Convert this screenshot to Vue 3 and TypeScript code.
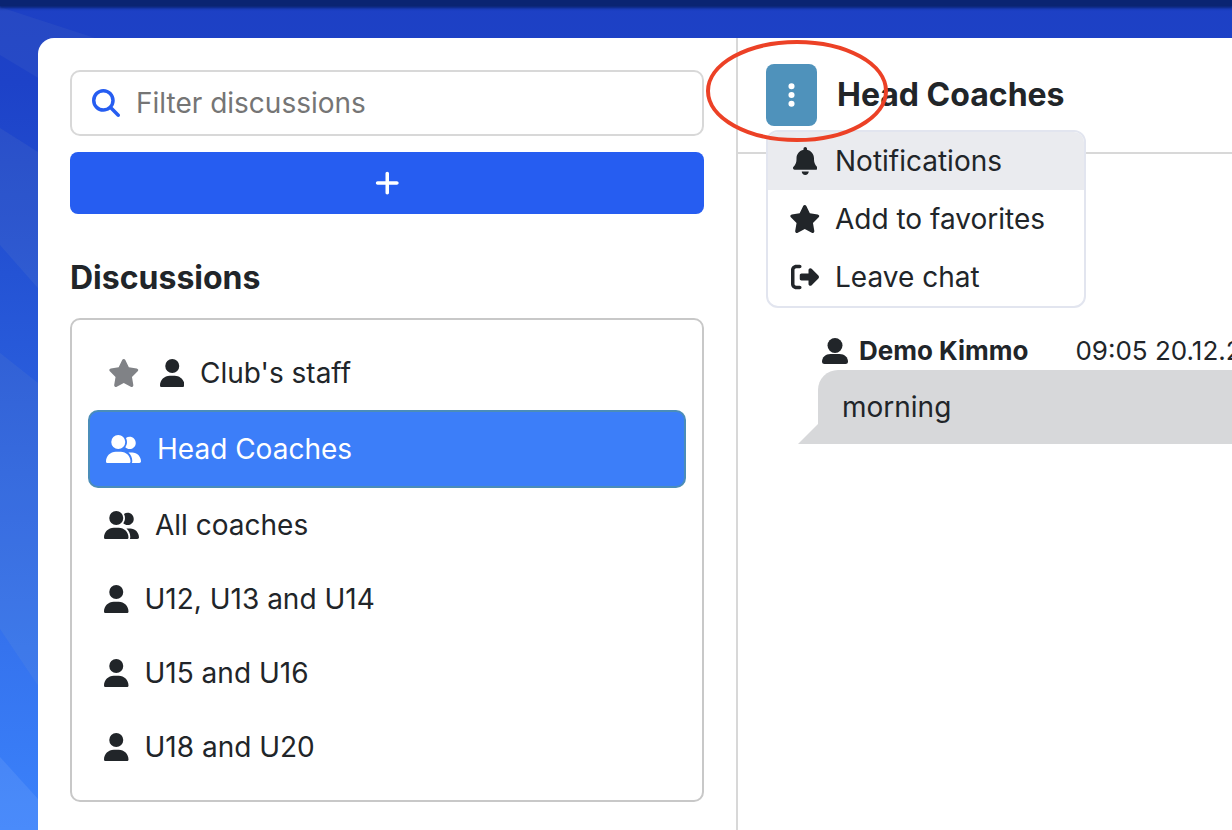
<script setup lang="ts">
import { ref } from 'vue'

type IconName = 'user' | 'group' | 'star' | 'bell' | 'leave' | 'search' | 'plus' | 'dots'

interface Icon {
  width: number
  path: string
}

interface Discussion {
  id: number
  name: string
  icon: IconName
  favorite: boolean
}

interface MenuEntry {
  label: string
  icon: IconName
}

const icons: Record<IconName, Icon> = {
  user: {
    width: 448,
    path: 'M224 256A128 128 0 1 0 224 0a128 128 0 1 0 0 256zm-45.7 48C79.8 304 0 383.8 0 482.3C0 498.7 13.3 512 29.7 512H418.3c16.4 0 29.7-13.3 29.7-29.7C448 383.8 368.2 304 269.7 304H178.3z',
  },
  group: {
    width: 640,
    path: 'M96 128a128 128 0 1 1 256 0A128 128 0 1 1 96 128zM0 482.3C0 383.8 79.8 304 178.3 304h91.4C368.2 304 448 383.8 448 482.3c0 16.4-13.3 29.7-29.7 29.7H29.7C13.3 512 0 498.7 0 482.3zM609.3 512H471.4c5.4-9.4 8.6-20.3 8.6-32v-8c0-60.7-27.1-115.2-69.8-151.8c2.4-.1 4.7-.2 7.1-.2h61.4C567.8 320 640 392.2 640 481.3c0 17-13.8 30.7-30.7 30.7zM432 256c-31 0-59-12.6-79.3-32.9C372.4 196.5 384 163.6 384 128c0-26.8-6.6-52.1-18.3-74.3C384.3 40.1 407.2 32 432 32c61.9 0 112 50.1 112 112s-50.1 112-112 112z',
  },
  star: {
    width: 576,
    path: 'M316.9 18C311.6 7 300.4 0 288.1 0s-23.4 7-28.8 18L195 150.3 51.4 171.5c-12 1.8-22 10.2-25.7 21.7s-.7 24.2 7.9 32.7L137.8 329 113.2 474.7c-2 12 3 24.2 12.9 31.3s23 8 33.8 2.3l128.3-68.5 128.3 68.5c10.8 5.7 23.9 4.9 33.8-2.3s14.9-19.3 12.9-31.3L438.5 329 542.7 225.9c8.6-8.5 11.7-21.2 7.9-32.7s-13.7-19.9-25.7-21.7L381.2 150.3 316.9 18z',
  },
  bell: {
    width: 448,
    path: 'M224 0c-17.7 0-32 14.3-32 32V51.2C119 66 64 130.6 64 208v18.8c0 47-17.3 92.4-48.5 127.6l-7.4 8.3c-8.4 9.4-10.4 22.9-5.3 34.4S19.4 416 32 416H416c12.6 0 24-7.4 29.2-18.9s3.1-25-5.3-34.4l-7.4-8.3C401.3 319.2 384 273.9 384 226.8V208c0-77.4-55-142-128-156.8V32c0-17.7-14.3-32-32-32zm45.3 493.3c12-12 18.7-28.3 18.7-45.3H224 160c0 17 6.7 33.3 18.7 45.3s28.3 18.7 45.3 18.7s33.3-6.7 45.3-18.7z',
  },
  leave: {
    width: 512,
    path: 'M377.9 105.9L500.7 228.7c7.2 7.2 11.3 17.1 11.3 27.3s-4.1 20.1-11.3 27.3L377.9 406.1c-6.4 6.4-15 9.9-24 9.9c-18.7 0-33.9-15.2-33.9-33.9l0-62.1-128 0c-17.7 0-32-14.3-32-32l0-64c0-17.7 14.3-32 32-32l128 0 0-62.1c0-18.7 15.2-33.9 33.9-33.9c9 0 17.6 3.6 24 9.9zM160 96L96 96c-17.7 0-32 14.3-32 32l0 256c0 17.7 14.3 32 32 32l64 0c17.7 0 32 14.3 32 32s-14.3 32-32 32l-64 0c-53 0-96-43-96-96L0 128C0 75 43 32 96 32l64 0c17.7 0 32 14.3 32 32s-14.3 32-32 32z',
  },
  search: {
    width: 512,
    path: 'M416 208c0 45.9-14.9 88.3-40 122.7L502.6 457.4c12.5 12.5 12.5 32.8 0 45.3s-32.8 12.5-45.3 0L330.7 376c-34.4 25.2-76.8 40-122.7 40C93.1 416 0 322.9 0 208S93.1 0 208 0S416 93.1 416 208zM208 352a144 144 0 1 0 0-288 144 144 0 1 0 0 288z',
  },
  plus: {
    width: 448,
    path: 'M256 80c0-17.7-14.3-32-32-32s-32 14.3-32 32V224H48c-17.7 0-32 14.3-32 32s14.3 32 32 32H192V432c0 17.7 14.3 32 32 32s32-14.3 32-32V288H400c17.7 0 32-14.3 32-32s-14.3-32-32-32H256V80z',
  },
  dots: {
    width: 128,
    path: 'M64 360a56 56 0 1 0 0 112 56 56 0 1 0 0-112zm0-160a56 56 0 1 0 0 112 56 56 0 1 0 0-112zM120 96A56 56 0 1 0 8 96a56 56 0 1 0 112 0z',
  },
}

const viewBox = (name: IconName): string => `0 0 ${icons[name].width} 512`

const discussions: Discussion[] = [
  { id: 1, name: "Club's staff", icon: 'user', favorite: true },
  { id: 2, name: 'Head Coaches', icon: 'group', favorite: false },
  { id: 3, name: 'All coaches', icon: 'group', favorite: false },
  { id: 4, name: 'U12, U13 and U14', icon: 'user', favorite: false },
  { id: 5, name: 'U15 and U16', icon: 'user', favorite: false },
  { id: 6, name: 'U18 and U20', icon: 'user', favorite: false },
]

const menu: MenuEntry[] = [
  { label: 'Notifications', icon: 'bell' },
  { label: 'Add to favorites', icon: 'star' },
  { label: 'Leave chat', icon: 'leave' },
]

const filter = ref('')
const selected = ref(2)
const menuOpen = ref(true)
</script>

<template>
  <div class="page">
    <svg class="rays" aria-hidden="true">
      <polygon class="faint" points="0,7 95,38 95,112 0,55" />
      <polygon points="0,128 95,188 95,353 0,245" />
      <polygon points="0,353 95,428 95,770 0,629" />
      <polygon class="bright" points="0,757 95,862 0,862" />
    </svg>
    <div class="topbar"></div>

    <main class="card">
      <aside class="sidebar">
        <label class="search">
          <svg class="icon" :viewBox="viewBox('search')" aria-hidden="true"><path :d="icons.search.path" /></svg>
          <input v-model="filter" type="text" placeholder="Filter discussions" aria-label="Filter discussions" />
        </label>
        <button class="add" type="button" aria-label="New discussion">
          <svg class="icon" :viewBox="viewBox('plus')" aria-hidden="true"><path :d="icons.plus.path" /></svg>
        </button>
        <h2 class="heading">Discussions</h2>
        <ul class="list">
          <li v-for="item in discussions" :key="item.id">
            <button
              type="button"
              class="item"
              :class="{ active: item.id === selected }"
              @click="selected = item.id"
            >
              <svg v-if="item.favorite" class="icon favorite" :viewBox="viewBox('star')" aria-hidden="true">
                <path :d="icons.star.path" />
              </svg>
              <svg class="icon" :viewBox="viewBox(item.icon)" aria-hidden="true">
                <path :d="icons[item.icon].path" />
              </svg>
              <span>{{ item.name }}</span>
            </button>
          </li>
        </ul>
      </aside>

      <section class="chat">
        <header class="chat-header">
          <div class="menu-anchor">
            <button
              class="menu-toggle"
              type="button"
              aria-label="Discussion options"
              :aria-expanded="menuOpen"
              @click="menuOpen = !menuOpen"
            >
              <svg class="icon" :viewBox="viewBox('dots')" aria-hidden="true"><path :d="icons.dots.path" /></svg>
            </button>
            <ul v-if="menuOpen" class="menu">
              <li v-for="entry in menu" :key="entry.label">
                <button type="button" class="menu-item" :class="{ current: entry.icon === 'bell' }">
                  <span class="menu-icon">
                    <svg class="icon" :viewBox="viewBox(entry.icon)" aria-hidden="true">
                      <path :d="icons[entry.icon].path" />
                    </svg>
                  </span>
                  {{ entry.label }}
                </button>
              </li>
            </ul>
            <svg class="highlight" viewBox="0 0 184 104" aria-hidden="true">
              <ellipse cx="92" cy="52" rx="89" ry="49" />
            </svg>
          </div>
          <h1 class="title">Head Coaches</h1>
        </header>

        <article class="message">
          <div class="meta">
            <svg class="avatar" viewBox="0 0 26 26" aria-hidden="true">
              <circle cx="13" cy="7.5" r="7.5" />
              <path d="M8.5 16h9C22.500 16 26 19.500 26 23.500 26 25.200 25 26 23.500 26h-21C1 26 0 25.200 0 23.500 0 19.500 3.500 16 8.500 16z" />
            </svg>
            <strong>Demo Kimmo</strong>
            <time>09:05 20.12.2023</time>
          </div>
          <p class="bubble">morning</p>
        </article>
      </section>
    </main>
  </div>
</template>

<style>
body {
  margin: 0;
}
</style>

<style scoped>
.page {
  position: relative;
  display: flex;
  flex-direction: column;
  min-height: 100vh;
  overflow: hidden;
  background: linear-gradient(#1d40c4 0, #1d42c8 10%, #2453d4 33%, #3573ee 78%, #3b82fb 100%);
  color: #212529;
  font-family: Inter, "Liberation Sans", sans-serif;
  font-size: 28px;
  line-height: 42px;
}

.rays {
  position: absolute;
  inset: 0;
  width: 100%;
  height: 100%;
  fill: #b4c4b4;
  fill-opacity: 0.08;
}

.rays .faint {
  fill-opacity: 0.06;
}

.rays .bright {
  fill: #ffffff;
}

.topbar {
  position: relative;
  height: 6px;
  background: #0a2472;
  box-shadow: 0 1px 3px 1px #0a2472;
}

.card {
  position: relative;
  display: grid;
  grid-template-columns: minmax(0, 700fr) minmax(0, 494fr);
  flex: 1;
  margin: 32px 0 0 38px;
  border-radius: 16px 0 0 0;
  background: #ffffff;
}

button,
input {
  color: inherit;
  font: inherit;
}

button {
  border: 0;
  cursor: pointer;
}

ul {
  margin: 0;
  padding: 0;
  list-style: none;
}

.icon {
  display: block;
  flex: none;
  height: 28px;
  fill: currentColor;
}

.sidebar {
  padding: 32px 32px 28px;
  border-right: 2px solid #d8d8d8;
}

.search {
  display: flex;
  align-items: center;
  gap: 16px;
  box-sizing: border-box;
  height: 66px;
  padding: 0 20px;
  border: 2px solid #d8d8d8;
  border-radius: 10px;
}

.search .icon {
  color: #265df1;
}

.search input {
  flex: 1;
  min-width: 0;
  padding: 0;
  border: 0;
  outline: 0;
  background: none;
}

.search input::placeholder {
  color: #757575;
  opacity: 1;
}

.add {
  display: flex;
  align-items: center;
  justify-content: center;
  width: 100%;
  height: 62px;
  margin-top: 16px;
  border-radius: 8px;
  background: #265df1;
  color: #ffffff;
}

.heading,
.title {
  margin: 0;
  font-size: 32px;
  font-weight: 700;
  line-height: 40px;
}

.heading {
  margin: 44px 0 20px;
}

.list {
  padding: 16px;
  border: 2px solid #c8c8c8;
  border-radius: 10px;
}

.item {
  display: flex;
  align-items: center;
  gap: 16px;
  box-sizing: border-box;
  width: 100%;
  padding: 16px;
  background: none;
  text-align: left;
}

.item.active {
  border: 2px solid #4b8db9;
  border-radius: 10px;
  background: #3c7ef9;
  color: #ffffff;
}

.favorite {
  margin: 0 4px;
  color: #808286;
}

.chat-header {
  display: flex;
  align-items: center;
  gap: 20px;
  height: 114px;
  padding-left: 28px;
  border-bottom: 2px solid #d8d8d8;
}

.menu-anchor {
  position: relative;
}

.menu-toggle {
  display: flex;
  align-items: center;
  justify-content: center;
  width: 51px;
  height: 62px;
  border-radius: 8px;
  background: #4f92bb;
  color: #ffffff;
}

.menu {
  position: absolute;
  top: 66px;
  left: 0;
  z-index: 1;
  width: 316px;
  overflow: hidden;
  border: 2px solid #e2e5ef;
  border-radius: 12px;
  background: #ffffff;
}

.menu-item {
  display: flex;
  align-items: center;
  gap: 13px;
  width: 100%;
  padding: 8px 20px;
  background: none;
  text-align: left;
}

.menu-item.current {
  background: #eaebef;
}

.menu-icon {
  display: flex;
  justify-content: center;
  width: 34px;
}

.highlight {
  position: absolute;
  top: -25px;
  left: -61px;
  z-index: 2;
  width: 184px;
  height: 104px;
  fill: none;
  stroke: #ec4126;
  stroke-width: 4px;
  pointer-events: none;
}

.message {
  margin: 177px 0 0 80px;
}

.meta {
  display: flex;
  align-items: center;
  gap: 11px;
  height: 39px;
  padding-left: 4px;
  font-size: 26px;
  line-height: 40px;
  white-space: nowrap;
}

.avatar {
  flex: none;
  width: 26px;
  height: 26px;
  fill: currentColor;
}

.meta time {
  margin-left: 36px;
}

.bubble {
  position: relative;
  margin: 0;
  padding: 16px 24px;
  border-top-left-radius: 20px;
  background: #d7d8da;
}

.bubble::before {
  content: "";
  position: absolute;
  bottom: 0;
  right: 100%;
  border-bottom: 20px solid #d7d8da;
  border-left: 20px solid transparent;
}
</style>
